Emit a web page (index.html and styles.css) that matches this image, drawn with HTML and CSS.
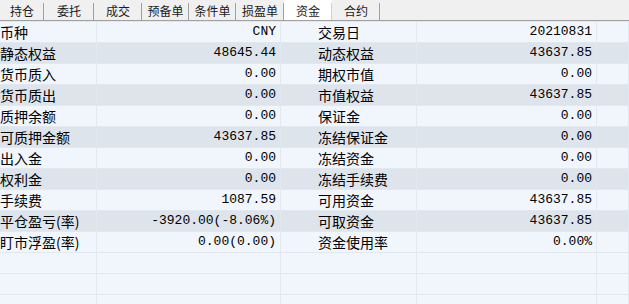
FILE: index.html
```html
<!DOCTYPE html>
<html lang="zh-CN">
<head>
  <meta charset="UTF-8" />
  <title>资金</title>
  <link rel="stylesheet" href="styles.css">
</head>
<body>
  <div class="tabs">
    <span class="tab w44">持仓</span>
    <span class="tab w50">委托</span>
    <span class="tab w48">成交</span>
    <span class="tab w47">预备单</span>
    <span class="tab w47">条件单</span>
    <span class="tab w48">损盈单</span>
    <span class="tab w48 active">资金</span>
    <span class="tab w48">合约</span>
  </div>
  <div class="grid">
    <div class="row"><span class="label">币种</span><span class="num">CNY</span><span class="label2">交易日</span><span class="num">20210831</span><span></span></div>
    <div class="row dark"><span class="label">静态权益</span><span class="num">48645.44</span><span class="label2">动态权益</span><span class="num">43637.85</span><span></span></div>
    <div class="row"><span class="label">货币质入</span><span class="num">0.00</span><span class="label2">期权市值</span><span class="num">0.00</span><span></span></div>
    <div class="row dark"><span class="label">货币质出</span><span class="num">0.00</span><span class="label2">市值权益</span><span class="num">43637.85</span><span></span></div>
    <div class="row"><span class="label">质押余额</span><span class="num">0.00</span><span class="label2">保证金</span><span class="num">0.00</span><span></span></div>
    <div class="row dark"><span class="label">可质押金额</span><span class="num">43637.85</span><span class="label2">冻结保证金</span><span class="num">0.00</span><span></span></div>
    <div class="row"><span class="label">出入金</span><span class="num">0.00</span><span class="label2">冻结资金</span><span class="num">0.00</span><span></span></div>
    <div class="row dark"><span class="label">权利金</span><span class="num">0.00</span><span class="label2">冻结手续费</span><span class="num">0.00</span><span></span></div>
    <div class="row"><span class="label">手续费</span><span class="num">1087.59</span><span class="label2">可用资金</span><span class="num">43637.85</span><span></span></div>
    <div class="row dark"><span class="label">平仓盈亏(率)</span><span class="num">-3920.00(-8.06%)</span><span class="label2">可取资金</span><span class="num">43637.85</span><span></span></div>
    <div class="row"><span class="label">盯市浮盈(率)</span><span class="num">0.00(0.00)</span><span class="label2">资金使用率</span><span class="num">0.00%</span><span></span></div>
    <div class="row"><span></span><span></span><span></span><span></span><span></span></div>
    <div class="row"><span></span><span></span><span></span><span></span><span></span></div>
    <div class="row"><span></span><span></span><span></span><span></span><span></span></div>
  </div>
</body>
</html>
```

FILE: styles.css
```css
body {
  margin: 0;
  background: #ffffff;
  font-family: "Noto Sans CJK SC", sans-serif;
  color: #000;
  overflow: hidden;
}
.tabs {
  display: flex;
  height: 20px;
  background: #f0f0f0;
  border-bottom: 1px solid #a0a0a0;
}
.tab {
  box-sizing: border-box;
  display: flex;
  align-items: center;
  justify-content: center;
  font-size: 12px;
  color: #1a1a1a;
  position: relative;
}
.tab::after {
  content: "";
  position: absolute;
  right: 0;
  top: 3px;
  bottom: 0;
  width: 1px;
  background: #a0a0a0;
}
.tab.active {
  background: #ffffff;
}
.tab.active::after {
  background: #d0d0d0;
}
.w44 { width: 44px; }
.w47 { width: 47px; }
.w48 { width: 48px; }
.w50 { width: 50px; }
.grid {
  border-top: 1px solid #e2e8ef;
}
.row {
  display: grid;
  grid-template-columns: 97px 184px 136px 180px 1fr;
  height: 21px;
  box-sizing: border-box;
  border-bottom: 1px solid #e2e8ef;
  background: #f1f6fc;
}
.row.dark {
  background: #dee4eb;
}
.row > span {
  box-sizing: border-box;
  border-right: 1px solid #e2e8ef;
  white-space: nowrap;
  overflow: hidden;
  line-height: 20px;
}
.label {
  font-size: 14px;
  padding-left: 0;
}
.label2 {
  font-size: 14px;
  padding-left: 37px;
}
.num {
  font-family: "Liberation Mono", monospace;
  font-size: 13px;
  text-align: right;
  padding-right: 4px;
}
```
